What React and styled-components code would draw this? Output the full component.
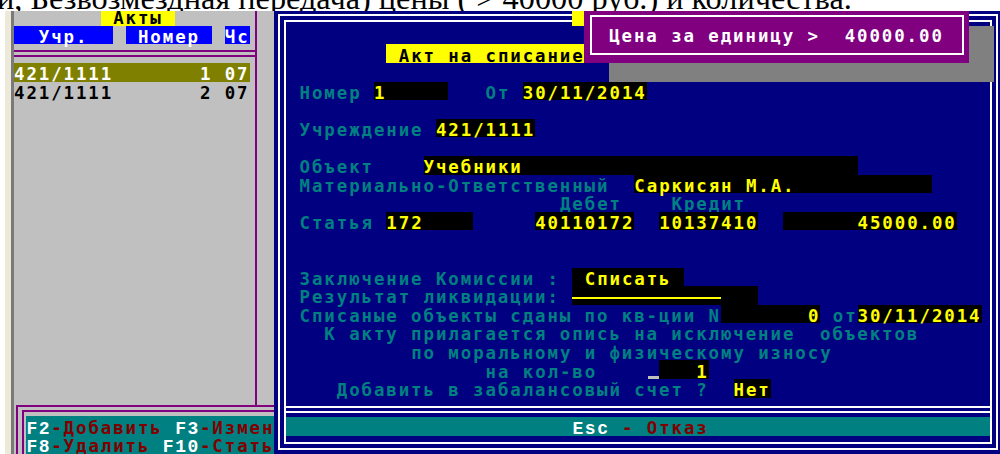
import React from "react";
import styled, { createGlobalStyle, css } from "styled-components";

// Text-mode metrics: one character cell of the console screen.
const CW = 12.4;
const CH = 18.6;
const cols = (n) => `${(n * CW).toFixed(2)}px`;
const rows = (n) => `${(n * CH).toFixed(2)}px`;

const C = {
  navy: "#000080",
  teal: "#008080",
  yellow: "#ffff00",
  black: "#000000",
  gray: "#c0c0c0",
  shadow: "#808080",
  purple: "#800080",
  olive: "#808000",
  blue: "#0000ff",
  white: "#ffffff",
  maroon: "#800000",
};

// Glyphs sit low in their cell, as the console font draws them.
const cellText = css`
  height: ${CH}px;
  padding-top: 2.2px;
`;

const GlobalStyle = createGlobalStyle`
  *, *::before, *::after { box-sizing: border-box; }
  html, body { margin: 0; padding: 0; background: #fff; overflow: hidden; }
  #root { width: 1000px; height: 454px; }
`;

const Page = styled.div`
  width: 1000px;
  height: 454px;
  display: flex;
  flex-direction: column;
  overflow: hidden;
  background: #fff;
`;

const DocLine = styled.div`
  height: 11px;
  flex-shrink: 0;
  overflow: hidden;
`;

const DocText = styled.p`
  margin: -17px 0 0 -3px;
  font-family: "Liberation Serif", "Times New Roman", serif;
  font-size: 32.3px;
  line-height: 30px;
  white-space: nowrap;
  color: #000;
`;

const Desktop = styled.div`
  display: flex;
  height: 443px;
  flex-shrink: 0;
`;

const WinEdge = styled.div`
  width: 14px;
  flex-shrink: 0;
  background: #ece9d8;
  border-left: 5px solid #fff;
  border-right: 3px solid #7a7a7a;
`;

const Screen = styled.div`
  width: 986px;
  height: 443px;
  overflow: hidden;
  font-family: "DejaVu Sans Mono", "Liberation Mono", monospace;
  font-size: 17.4px;
  font-weight: bold;
  letter-spacing: ${(CW - 17.4 * 0.6021).toFixed(3)}px;
  line-height: ${CH}px;
  white-space: pre;
`;

const ScreenGrid = styled.div`
  display: flex;
  margin-top: -3.8px;
`;

/* ---------- left list panel ---------- */

const LeftPanel = styled.div`
  width: ${cols(21)};
  height: ${rows(24)};
  flex-shrink: 0;
  overflow: hidden;
  background: ${C.gray};
  display: flex;
  flex-direction: column;
`;

const ListArea = styled.div`
  width: 243px;
  height: ${(21 * CH + 6.7).toFixed(2)}px;
  border-right: 2px solid ${C.purple};
  display: flex;
  flex-direction: column;
`;

const Line = styled.div`
  height: ${CH}px;
  display: flex;
  flex-shrink: 0;
`;

const Gap = styled.span`
  display: block;
  flex: 0 0 auto;
  width: ${(p) => cols(p.$w)};
`;

const TitleTag = styled.span`
  ${cellText};
  display: block;
  flex: 0 0 auto;
  width: ${(p) => cols(p.$w)};
  background: ${C.yellow};
  color: ${C.black};
`;

const HeaderRow = styled.div`
  height: ${CH}px;
  display: flex;
  gap: ${CW}px;
  flex-shrink: 0;
`;

const HeadCell = styled.span`
  ${cellText};
  display: block;
  width: ${(p) => cols(p.$w)};
  background: ${C.blue};
  color: ${C.white};
`;

const DoubleRule = styled.div`
  height: ${CH}px;
  flex-shrink: 0;
  display: flex;
  flex-direction: column;
  justify-content: center;
  gap: 3px;
  &::before,
  &::after {
    content: "";
    height: 2px;
    background: ${C.purple};
  }
`;

const ListRow = styled.div`
  ${cellText};
  width: ${cols(19)};
  flex-shrink: 0;
  background: ${(p) => (p.$selected ? C.olive : "transparent")};
  color: ${(p) => (p.$selected ? C.white : C.black)};
`;

const FKeyBox = styled.div`
  height: ${(3 * CH - 6.7).toFixed(2)}px;
  padding-left: 2px;
  display: flex;
`;

const FKeyOuter = styled.div`
  flex: 1;
  border-top: 2px solid ${C.purple};
  border-left: 2px solid ${C.purple};
  padding: 3.5px 0 0 4px;
  display: flex;
`;

const FKeyInner = styled.div`
  flex: 1;
  border-top: 2px solid ${C.purple};
  border-left: 2px solid ${C.purple};
  padding: 4.4px 0 0 2.4px;
`;

const FKeyBar = styled.div`
  height: ${rows(2)};
  width: 400px;
  background: ${C.teal};
`;

const KeyLine = styled.div`
  ${cellText};
`;

const Key = styled.span`
  color: ${C.white};
  font-family: "Liberation Mono", "Courier New", monospace;
  font-size: 18px;
  letter-spacing: ${(CW - 18 * 0.6).toFixed(3)}px;
`;

const Action = styled.span`
  color: ${C.maroon};
`;

/* ---------- write-off dialog ---------- */

const Dialog = styled.div`
  position: relative;
  width: ${cols(59)};
  height: ${rows(24)};
  flex-shrink: 0;
  background: ${C.navy};
  padding: 6.8px 8px 3.6px 3.6px;
`;

const OuterFrame = styled.div`
  height: 100%;
  border: 2px solid ${C.white};
  padding: 4px;
`;

const InnerFrame = styled.div`
  height: 100%;
  border: 2px solid ${C.white};
  display: flex;
  flex-direction: column;
`;

const FormArea = styled.div`
  padding: 3.8px 0 0 1.2px;
  height: ${(3.8 + 20 * CH).toFixed(2)}px;
  flex-shrink: 0;
`;

const Label = styled.span`
  ${cellText};
  display: block;
  flex: 0 0 auto;
  width: ${(p) => cols(p.$w)};
  color: ${C.teal};
`;

const Field = styled.span`
  ${cellText};
  display: block;
  flex: 0 0 auto;
  width: ${(p) => cols(p.$w)};
  background: ${C.black};
  color: ${C.yellow};
  text-align: ${(p) => (p.$right ? "right" : "left")};
`;

const Underline = styled.span`
  display: block;
  width: ${(p) => cols(p.$w)};
  height: 2px;
  margin-top: 9px;
  background: ${C.yellow};
`;

const Cursor = styled.span`
  display: block;
  flex: 0 0 auto;
  width: ${cols(1)};
  position: relative;
  &::after {
    content: "";
    position: absolute;
    left: 1px;
    width: 11px;
    bottom: 0;
    height: 3px;
    background: ${C.gray};
  }
`;

const Separator = styled.div`
  margin-top: 8.2px;
  height: 7px;
  flex-shrink: 0;
  border-top: 2px solid ${C.white};
  border-bottom: 2px solid ${C.white};
`;

const CommandBar = styled.div`
  margin-top: 4px;
  height: 19px;
  line-height: 19px;
  flex-shrink: 0;
  background: ${C.teal};
  padding: 1.6px 0 0 ${(1.2 + 23 * CW).toFixed(2)}px;
`;

const TitleNub = styled.div`
  position: absolute;
  left: ${(572 - 274.4).toFixed(1)}px;
  top: 0;
  width: ${CW}px;
  height: ${CH}px;
  background: ${C.yellow};
`;

const Shadow = styled.div`
  position: absolute;
  left: ${cols(27)};
  top: ${CH}px;
  width: ${cols(31)};
  height: ${rows(3)};
  background: ${C.shadow};
`;

const Popup = styled.div`
  position: absolute;
  left: ${cols(25)};
  top: 0;
  width: ${cols(31)};
  height: ${rows(3)};
  background: ${C.purple};
  padding: 8px 5px 8px 6px;
`;

const PopupBox = styled.div`
  height: 100%;
  border: 2px solid ${C.white};
  display: flex;
  align-items: center;
  padding: 2px 0 0 16.8px;
  color: ${C.white};
`;

export default function App() {
  return (
    <>
      <GlobalStyle />
      <Page>
        <DocLine>
          <DocText>и, Безвозмездная передача) цены ( &gt; 40000 руб.) и количества.</DocText>
        </DocLine>
        <Desktop>
          <WinEdge />
          <Screen>
            <ScreenGrid>
              <LeftPanel>
                <ListArea>
                  <Line>
                    <Gap $w={7} />
                    <TitleTag $w={6}>{" Акты"}</TitleTag>
                  </Line>
                  <HeaderRow>
                    <HeadCell $w={8}>{"  Учр."}</HeadCell>
                    <HeadCell $w={7}>{" Номер"}</HeadCell>
                    <HeadCell $w={2}>{"Чс"}</HeadCell>
                  </HeaderRow>
                  <DoubleRule />
                  <ListRow $selected>{"421/1111       1 07"}</ListRow>
                  <ListRow>{"421/1111       2 07"}</ListRow>
                </ListArea>
                <FKeyBox>
                  <FKeyOuter>
                    <FKeyInner>
                      <FKeyBar>
                        <KeyLine>
                          <Key>F2</Key>
                          <Action>{"-Добавить "}</Action>
                          <Key>F3</Key>
                          <Action>{"-Изменить"}</Action>
                        </KeyLine>
                        <KeyLine>
                          <Key>F8</Key>
                          <Action>{"-Удалить "}</Action>
                          <Key>F10</Key>
                          <Action>{"-Статьи"}</Action>
                        </KeyLine>
                      </FKeyBar>
                    </FKeyInner>
                  </FKeyOuter>
                </FKeyBox>
              </LeftPanel>

              <Dialog>
                <OuterFrame>
                  <InnerFrame>
                    <FormArea>
                      <Line />
                      <Line>
                        <Gap $w={8} />
                        <TitleTag $w={17}>{" Акт на списание "}</TitleTag>
                      </Line>
                      <Line />
                      <Line>
                        <Label $w={7}>{" Номер "}</Label>
                        <Field $w={6}>1</Field>
                        <Label $w={6}>{"   От "}</Label>
                        <Field $w={10}>30/11/2014</Field>
                      </Line>
                      <Line />
                      <Line>
                        <Label $w={12}>{" Учреждение "}</Label>
                        <Field $w={8}>421/1111</Field>
                      </Line>
                      <Line />
                      <Line>
                        <Label $w={11}>{" Объект"}</Label>
                        <Field $w={35}>Учебники</Field>
                      </Line>
                      <Line>
                        <Label $w={28}>{" Материально-Ответственный"}</Label>
                        <Field $w={24}>Саркисян М.А.</Field>
                      </Line>
                      <Line>
                        <Gap $w={22} />
                        <Label $w={9}>Дебет</Label>
                        <Label $w={6}>Кредит</Label>
                      </Line>
                      <Line>
                        <Label $w={8}>{" Статья "}</Label>
                        <Field $w={7}>172</Field>
                        <Gap $w={5} />
                        <Field $w={8}>40110172</Field>
                        <Gap $w={2} />
                        <Field $w={8}>10137410</Field>
                        <Gap $w={2} />
                        <Field $w={14} $right>
                          45000.00
                        </Field>
                      </Line>
                      <Line />
                      <Line />
                      <Line>
                        <Label $w={23}>{" Заключение Комиссии : "}</Label>
                        <Field $w={9}>{" Списать"}</Field>
                      </Line>
                      <Line>
                        <Label $w={23}>{" Результат ликвидации: "}</Label>
                        <Field $w={15}>
                          <Underline $w={12} />
                        </Field>
                      </Line>
                      <Line>
                        <Label $w={35}>{" Списаные объекты сданы по кв-ции N"}</Label>
                        <Field $w={8} $right>
                          0
                        </Field>
                        <Label $w={3}>{" от"}</Label>
                        <Field $w={10}>30/11/2014</Field>
                      </Line>
                      <Line>
                        <Gap $w={3} />
                        <Label $w={51}>К акту прилагается опись на исключение  объектов</Label>
                      </Line>
                      <Line>
                        <Gap $w={10} />
                        <Label $w={34}>по моральному и физическому износу</Label>
                      </Line>
                      <Line>
                        <Gap $w={16} />
                        <Label $w={13}>на кол-во</Label>
                        <Cursor />
                        <Field $w={4} $right>
                          1
                        </Field>
                      </Line>
                      <Line>
                        <Gap $w={4} />
                        <Label $w={32}>Добавить в забалансовый счет ?</Label>
                        <Field $w={3}>Нет</Field>
                      </Line>
                    </FormArea>
                    <Separator />
                    <CommandBar>
                      <Key>Esc</Key>
                      <Action>{" - Отказ"}</Action>
                    </CommandBar>
                  </InnerFrame>
                </OuterFrame>

                <TitleNub />
                <Shadow />
                <Popup>
                  <PopupBox>{"Цена за единицу >  40000.00"}</PopupBox>
                </Popup>
              </Dialog>
            </ScreenGrid>
          </Screen>
        </Desktop>
      </Page>
    </>
  );
}
